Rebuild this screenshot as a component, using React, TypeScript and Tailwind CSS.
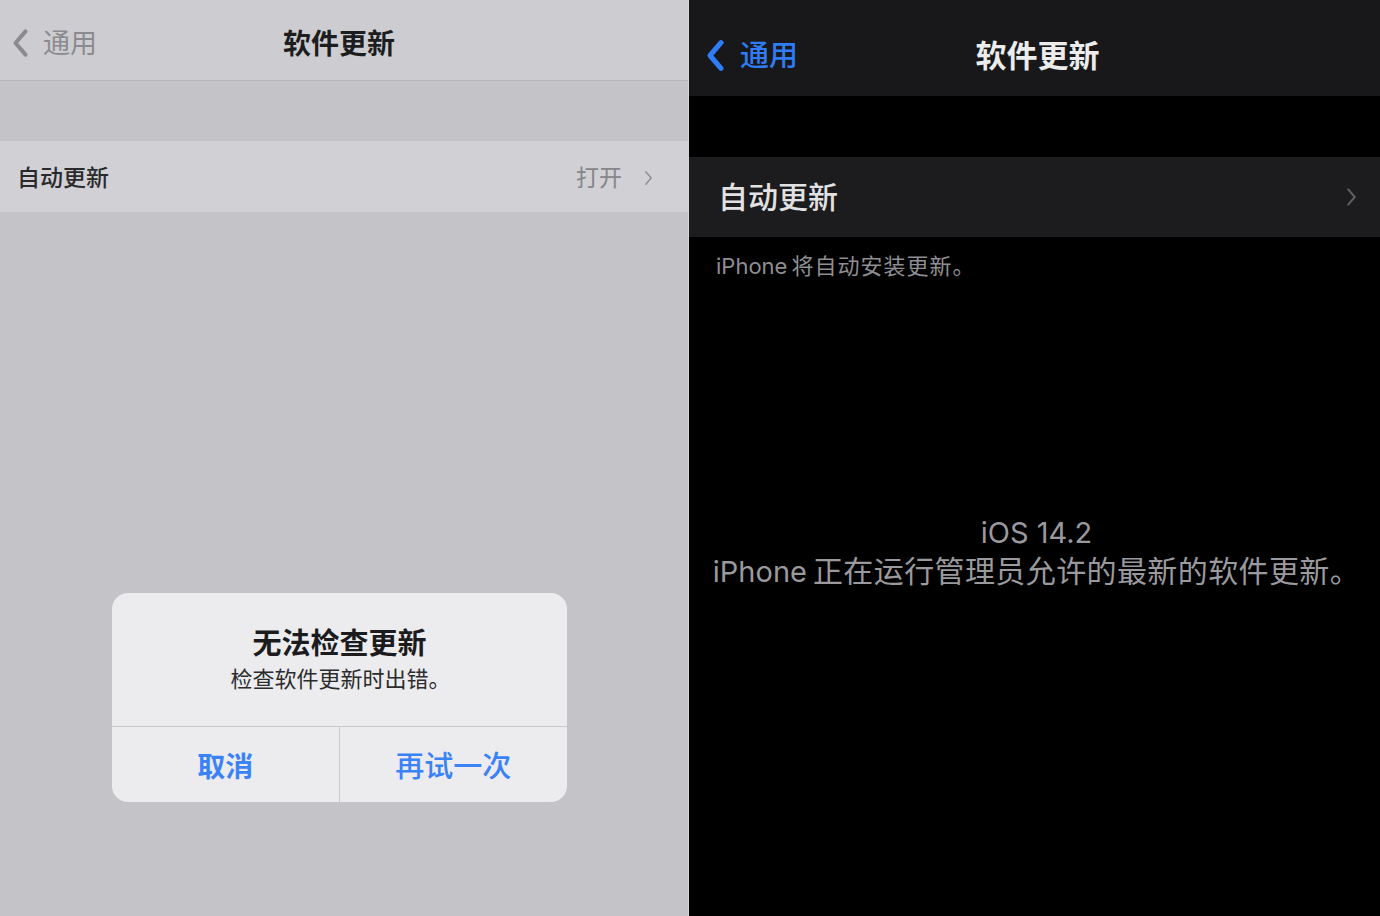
import React from "react";

const font = { fontFamily: "Inter, 'Noto Sans CJK SC', sans-serif" };

function Chevron({ className, dir = "right", sw = 2 }: { className?: string; dir?: "left" | "right"; sw?: number }) {
  return (
    <svg viewBox="0 0 10 18" className={className} fill="none" stroke="currentColor" strokeWidth={sw} strokeLinecap="round" strokeLinejoin="round">
      {dir === "right" ? <polyline points="2,2 8,9 2,16" /> : <polyline points="8,2 2,9 8,16" />}
    </svg>
  );
}

function LightPane() {
  return (
    <div className="w-[689px] h-full flex flex-col bg-[#c4c3c8] border-r border-[#d6d6da]">
      {/* navigation bar */}
      <div className="h-[81px] bg-[#cdcdd1] border-b border-[#b8b8bc] grid grid-cols-[1fr_auto_1fr] items-center pr-[10px]">
        <div className="flex items-center pl-[12px] gap-[14px] text-[#8b8b8f] pt-[6px]">
          <Chevron dir="left" sw={2.4} className="w-[17px] h-[30px]" />
          <span className="text-[27px] leading-none">通用</span>
        </div>
        <div className="text-[28px] font-bold text-[#1d1d1f] leading-none pt-[8px]">软件更新</div>
        <div />
      </div>
      <div className="h-[60px]" />
      {/* auto update row */}
      <div className="h-[71px] bg-[#d1d0d4] flex items-center pl-[17px] pt-[3px]">
        <span className="text-[23px] font-medium text-[#2a2a2c] leading-none flex-1">自动更新</span>
        <span className="text-[23px] text-[#85858a] leading-none">打开</span>
        <Chevron sw={1.6} className="w-[9px] h-[16px] ml-[22px] mr-[35px] text-[#8e8e93]" />
      </div>
      <div className="flex-1">
        {/* alert */}
        <div className="mt-[381px] ml-[112px] w-[455px] rounded-[16px] bg-[#ececee] overflow-hidden">
          <div className="h-[134px] flex flex-col items-center border-b border-[#c9c9cd]">
            <div className="mt-[35px] text-[29px] font-bold text-[#1c1c1e] leading-[32px]">无法检查更新</div>
            <div className="mt-[5px] text-[22px] text-[#2c2c2e] leading-[28px] pl-[2px]">检查软件更新时出错。</div>
          </div>
          <div className="h-[75px] grid grid-cols-2">
            <div className="flex items-center justify-center border-r border-[#c9c9cd] text-[28px] font-bold text-[#3b82f6] pt-[4px]">取消</div>
            <div className="flex items-center justify-center text-[29px] font-medium text-[#3b82f6] pt-[4px]">再试一次</div>
          </div>
        </div>
      </div>
    </div>
  );
}

function DarkPane() {
  return (
    <div className="flex-1 h-full flex flex-col bg-black">
      <div className="h-[96px] bg-[#18181a] grid grid-cols-[1fr_auto_1fr] items-center">
        <div className="flex items-center pl-[17px] gap-[15px] text-[#2f7cf4] pt-[14px]">
          <Chevron dir="left" sw={2.8} className="w-[19px] h-[33px]" />
          <span className="text-[29px] font-medium leading-none">通用</span>
        </div>
        <div className="text-[31px] font-bold text-[#ececec] leading-none pt-[14px] pl-[6px]">软件更新</div>
        <div />
      </div>
      <div className="h-[61px]" />
      <div className="h-[80px] bg-[#1c1c1e] flex items-center pl-[29px] pr-[23px]">
        <span className="text-[30px] font-medium text-[#e2e2e4] leading-none flex-1">自动更新</span>
        <Chevron sw={1.8} className="w-[11px] h-[20px] text-[#5f5f63]" />
      </div>
      <div className="pl-[27px] pt-[14px] text-[22px] text-[#8e8e93] leading-[30px]">
        iPhone<span className="ml-[4px] tracking-[1px]">将自动安装更新。</span>
      </div>
      <div className="mt-[233px] flex flex-col items-center text-[#9a9a9e] text-[29px] leading-[38px] pl-[4px]">
        <span>iOS 14.2</span>
        <span>
          iPhone<span className="ml-[6px] text-[30px] tracking-[0.4px]">正在运行管理员允许的最新的软件更新。</span>
        </span>
      </div>
    </div>
  );
}

export default function App() {
  return (
    <div className="w-[1380px] h-[916px] flex overflow-hidden" style={font}>
      <LightPane />
      <DarkPane />
    </div>
  );
}
